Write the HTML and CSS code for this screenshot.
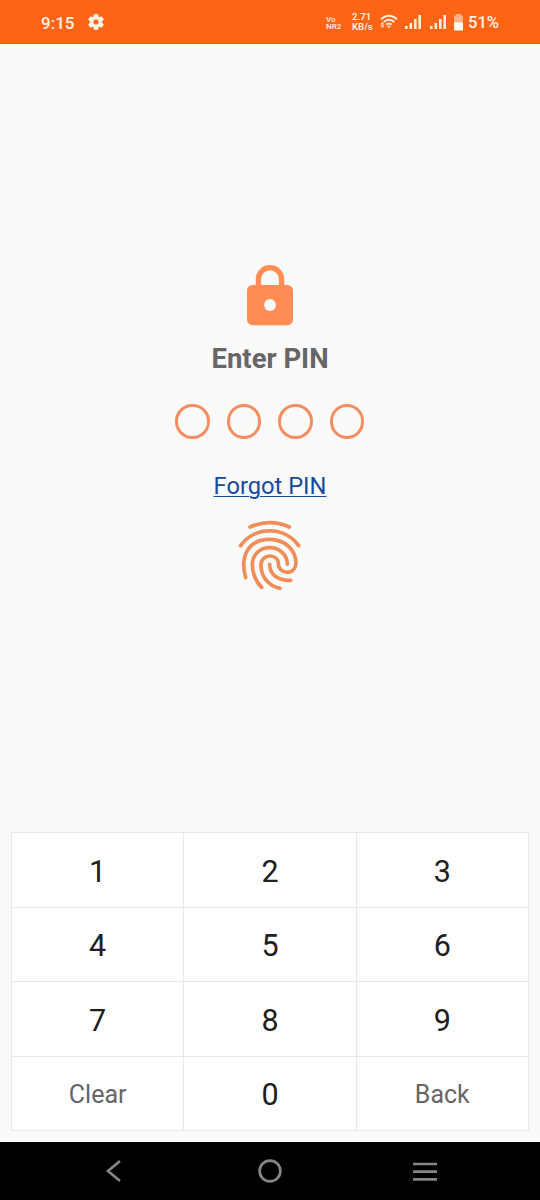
FILE: index.html
```
<!DOCTYPE html>
<html lang="en">
<head>
    <meta charset="UTF-8">
    <meta name="viewport" content="width=device-width, initial-scale=1.0">
    <title>Enter PIN</title>
    <link rel="stylesheet" href="styles.css">
</head>
<body>
    <div class="screen">
        <header class="status-bar">
            <span class="time">9:15</span>
            <svg class="gear" width="16" height="16" viewBox="2 2 20 20">
                <path fill="#fff3e8" stroke="#fff3e8" stroke-width=".8" d="M19.14 12.94c.04-.3.06-.61.06-.94 0-.32-.02-.64-.07-.94l2.03-1.58c.18-.14.23-.41.12-.61l-1.92-3.32c-.12-.22-.37-.29-.59-.22l-2.39.96c-.5-.38-1.03-.7-1.62-.94l-.36-2.54c-.04-.24-.24-.41-.48-.41h-3.84c-.24 0-.43.17-.47.41l-.36 2.54c-.59.24-1.13.57-1.62.94l-2.39-.96c-.22-.08-.47 0-.59.22L2.74 8.87c-.12.21-.08.47.12.61l2.03 1.58c-.05.3-.09.63-.09.94s.02.64.07.94l-2.03 1.58c-.18.14-.23.41-.12.61l1.92 3.32c.12.22.37.29.59.22l2.39-.96c.5.38 1.03.7 1.62.94l.36 2.54c.05.24.24.41.48.41h3.84c.24 0 .44-.17.47-.41l.36-2.54c.59-.24 1.13-.56 1.62-.94l2.39.96c.22.08.47 0 .59-.22l1.92-3.32c.12-.22.07-.47-.12-.61l-2.01-1.58zM12 15.6c-1.98 0-3.6-1.62-3.6-3.6s1.62-3.6 3.6-3.6 3.6 1.62 3.6 3.6-1.62 3.6-3.6 3.6z"/>
            </svg>
            <div class="network">
                <div class="volte"><span>Vo</span><span>NR<small>2</small></span></div>
                <div class="speed"><span>2.71</span><span>KB/s</span></div>
                <svg class="wifi" width="18" height="16" viewBox="0 0 18 16" fill="none" stroke="#ffeede" stroke-width="1.9">
                    <path d="M1 5.2Q9 -1.8 17 5.2"/>
                    <path d="M3.6 8Q9 3.4 14.4 8"/>
                    <path d="M6.2 10.6Q9 8.2 11.8 10.6"/>
                    <path d="M7 11.8h4L9 14.6z" fill="#ffeede" stroke="none"/>
                    <path d="M.2 10.6L2.3 8L4.4 10.6zM.4 11.4h4L2.4 14z" fill="#ffeede" stroke="none"/>
                </svg>
                <svg class="signal" width="17" height="14" viewBox="0 0 17 14" fill="#ffeede">
                    <path d="M0 11h2.6v3H0zM4.5 8h2.6v6H4.5zM9 4h2.6v10H9zM13.4 0H16v14h-2.6z"/>
                </svg>
                <svg class="signal second" width="17" height="14" viewBox="0 0 17 14" fill="#ffeede">
                    <path d="M0 11h2.6v3H0zM4.5 8h2.6v6H4.5zM9 4h2.6v10H9zM13.4 0H16v14h-2.6z"/>
                </svg>
                <svg class="battery" width="9" height="17" viewBox="0 0 9 17">
                    <path fill="#ffb38a" d="M2 0h5v1.5h1.2q.8 0 .8.8V9H0V2.3q0-.8.8-.8H2z"/>
                    <path fill="#fff" d="M0 8.5h9v7.2q0 .8-.8.8H.8q-.8 0-.8-.8z"/>
                </svg>
                <span class="percent">51%</span>
            </div>
        </header>

        <main class="pin">
            <svg class="lock" width="46" height="61" viewBox="0 0 46 61">
                <path d="M11.4 23V14.3a11.6 11.6 0 0 1 23.2 0V23" fill="none" stroke="#ff8d54" stroke-width="5.3"/>
                <rect y="20" width="46" height="40.2" rx="5.5" fill="#ff8d54"/>
                <circle cx="23" cy="40" r="5.9" fill="#fafafa"/>
            </svg>
            <h1>Enter PIN</h1>
            <div class="dots">
                <span></span>
                <span></span>
                <span></span>
                <span></span>
            </div>
            <a class="forgot" href="#">Forgot PIN</a>
            <svg class="fingerprint" width="90" height="90" viewBox="0 0 270 270">
                <path d="M75 51Q134 25 193 51"/>
                <path d="M47 107C88 48 180 48 221 107"/>
                <path d="M62 203C44 138 70 88 134 88C180 88 213 120 213 160C213 175 201 187 187 187C172 187 160 175 160 161C160 147 149 138 134 138C120 138 108 148 108 165C108 200 130 228 165 235"/>
                <path d="M187 163C187 134 163 113 134 113C105 113 82 134 82 163C82 192 93 215 110 232"/>
                <path d="M134 163C134 195 160 213 197 211"/>
            </svg>
        </main>

        <div class="keypad">
            <button>1</button>
            <button>2</button>
            <button>3</button>
            <button>4</button>
            <button>5</button>
            <button>6</button>
            <button>7</button>
            <button>8</button>
            <button>9</button>
            <button class="action">Clear</button>
            <button>0</button>
            <button class="action">Back</button>
        </div>

        <nav class="nav-bar">
            <svg width="26" height="26" viewBox="0 0 26 26"><path d="M18 3L6 13L18 23"/></svg>
            <svg width="26" height="26" viewBox="0 0 26 26"><circle cx="13" cy="13" r="10.4"/></svg>
            <svg width="26" height="26" viewBox="0 0 26 26"><path d="M1 6h24M1 13.6h24M1 21.4h24"/></svg>
        </nav>
    </div>
</body>
</html>
```
FILE: styles.css
```
* {
    box-sizing: border-box;
}
body {
    margin: 0;
    font-family: Roboto, "Liberation Sans", sans-serif;
    background-color: #fafafa;
}
.screen {
    display: flex;
    flex-direction: column;
    width: 540px;
    height: 1200px;
}

.status-bar {
    display: flex;
    align-items: center;
    height: 44px;
    padding: 0 41px;
    background-color: #ff6314;
    color: #fff3e8;
}
.time {
    width: 47px;
    font-size: 17px;
    font-weight: 500;
    padding-top: 1px;
}
.network {
    display: flex;
    align-items: center;
    margin-left: auto;
}
.volte, .speed {
    display: flex;
    flex-direction: column;
}
.volte {
    width: 26px;
    font-size: 8px;
    font-weight: 500;
    line-height: 7px;
    padding-top: 1px;
}
.volte span {
    height: 7px;
}
.volte small {
    font-size: 8px;
    line-height: 1;
}
.speed {
    width: 28px;
    font-size: 9.5px;
    font-weight: 600;
    line-height: 10px;
}
.signal { margin-left: 7px; }
.signal.second { margin-left: 8px; }
.battery { margin-left: 7px; }
.percent {
    margin-left: 5px;
    font-size: 16.5px;
    font-weight: 500;
    padding-top: 1px;
}

.pin {
    display: flex;
    flex-direction: column;
    align-items: center;
    flex: 1;
    padding-top: 221px;
}
.lock { display: block; }
h1 {
    margin: 17px 0 0;
    font-size: 27.5px;
    line-height: 32px;
    font-weight: 700;
    color: #666;
}
.dots {
    display: flex;
    gap: 17px;
    margin: 29px 1px 0 0;
}
.dots span {
    width: 34.5px;
    height: 34.5px;
    border: 3px solid #f68d60;
    border-radius: 50%;
}
.forgot {
    margin-top: 33px;
    font-size: 23.7px;
    line-height: 28px;
    color: #174a9c;
    text-decoration-thickness: 1px;
    text-underline-offset: 2px;
}
.fingerprint {
    margin-top: 10px;
    fill: none;
    stroke: #f18d57;
    stroke-width: 11;
    stroke-linecap: round;
    stroke-linejoin: round;
}

.keypad {
    display: grid;
    grid-template-columns: repeat(3, 1fr);
    grid-template-rows: 74px 73px 74px 73px;
    gap: 1px;
    margin: 0 11px 11px;
    border: 1px solid #e9e9e9;
    background-color: #e9e9e9;
}
.keypad button {
    padding: 2px 0 0;
    border: 0;
    background-color: #fff;
    font-family: inherit;
    font-size: 30.5px;
    color: #202020;
}
.keypad .action {
    font-size: 25px;
    color: #666;
}

.nav-bar {
    display: flex;
    justify-content: space-between;
    align-items: center;
    height: 58px;
    padding: 0 102px;
    background-color: #000;
}
.nav-bar svg {
    fill: none;
    stroke: #858585;
    stroke-width: 2.7;
}
```
